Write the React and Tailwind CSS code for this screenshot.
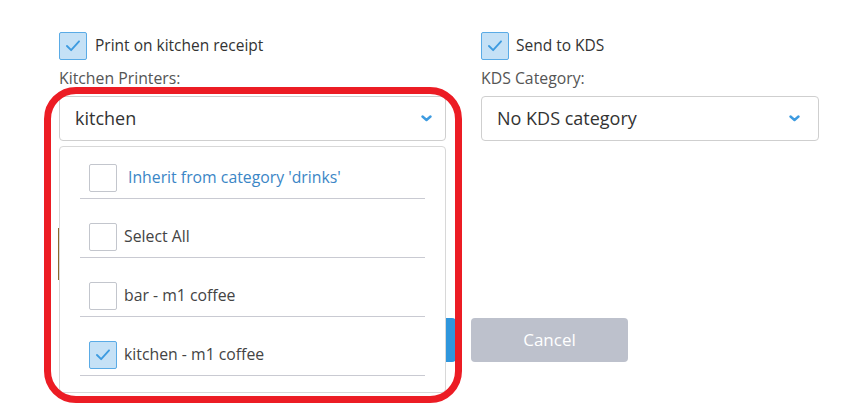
import React from "react";

const Check = () => (
  <svg width="28" height="28" viewBox="0 0 28 28" className="block">
    <polyline
      points="7.5,14 12,18.5 20.5,9"
      fill="none"
      stroke="#3d9be0"
      strokeWidth="2"
      strokeLinecap="round"
      strokeLinejoin="round"
    />
  </svg>
);

const Checkbox = ({ checked }) =>
  checked ? (
    <div className="w-[28px] h-[28px] shrink-0 rounded-[2px] border border-[#5aabe6] bg-[#c5e1f6] flex items-center justify-center">
      <Check />
    </div>
  ) : (
    <div className="w-[28px] h-[28px] shrink-0 rounded-[2px] border border-[#c3c6cd] bg-white" />
  );

const Chevron = () => (
  <svg width="11" height="7" viewBox="0 0 11 7" className="block">
    <polyline
      points="1.5,1.5 5.5,5 9.5,1.5"
      fill="none"
      stroke="#3d9be0"
      strokeWidth="2.4"
      strokeLinecap="round"
      strokeLinejoin="round"
    />
  </svg>
);

const printers = [
  { label: "Inherit from category 'drinks'", checked: false, inherit: true },
  { label: "Select All", checked: false },
  { label: "bar - m1 coffee", checked: false },
  { label: "kitchen - m1 coffee", checked: true },
];

const App = () => {
  return (
    <div className="relative w-[868px] h-[410px] overflow-hidden bg-white font-['Open_Sans',sans-serif] text-[#333]">
      <div className="flex pl-[59px] pt-[32px]">
        {/* kitchen printers */}
        <div className="w-[387px]">
          <div className="flex items-center gap-[8px] h-[28px]">
            <Checkbox checked />
            <span className="text-[15.5px]">Print on kitchen receipt</span>
          </div>
          <div className="mt-[8px] text-[15.8px] leading-[20px] text-[#555]">
            Kitchen Printers:
          </div>
          <div className="relative mt-[8px]">
            <div className="h-[45px] flex items-center justify-between pl-[15px] pr-[13px] border border-[#cfcfcf] rounded-[4px] bg-white">
              <span className="text-[18px]">kitchen</span>
              <Chevron />
            </div>

            {/* open menu */}
            <div className="absolute left-0 top-[50px] z-10 w-[387px] bg-white border border-[#d8d8d8] rounded-[4px] px-[20px] pt-[17px] pb-[16px]">
              {printers.map((p, i) => (
                <div
                  key={p.label}
                  className={`flex items-center border-b border-[#c9cad2] pl-[9px] pb-[6px] ${
                    i === 0 ? "pt-0" : "pt-[24px]"
                  }`}
                >
                  <Checkbox checked={p.checked} />
                  <span
                    className={
                      p.inherit
                        ? "ml-[11px] text-[15.8px] text-[#3b86c6]"
                        : "ml-[7px] text-[15.8px] text-[#444]"
                    }
                  >
                    {p.label}
                  </span>
                </div>
              ))}
            </div>
          </div>
        </div>

        {/* kds */}
        <div className="ml-[35px] w-[338px]">
          <div className="flex items-center gap-[7px] h-[28px]">
            <Checkbox checked />
            <span className="text-[15.5px]">Send to KDS</span>
          </div>
          <div className="mt-[8px] text-[15.8px] leading-[20px] text-[#555]">
            KDS Category:
          </div>
          <div className="mt-[8px] h-[45px] flex items-center justify-between pl-[15px] pr-[18px] border border-[#cfcfcf] rounded-[4px] bg-white">
            <span className="text-[18px]">No KDS category</span>
            <Chevron />
          </div>
        </div>
      </div>

      {/* hidden field behind the menu */}
      <div className="ml-[58px] mt-[87px] w-[2px] h-[52px] bg-[#8a6a2c]" />

      <div className="flex gap-[15px] pl-[299px] mt-[38px]">
        <button className="w-[157px] h-[44px] rounded-[4px] bg-[#2f96dc] text-white text-[17px]">
          Save
        </button>
        <button className="w-[157px] h-[44px] rounded-[4px] bg-[#bdc1cc] text-white text-[17px]">
          Cancel
        </button>
      </div>

      {/* annotation */}
      <div className="absolute left-[44px] top-[87px] w-[418px] h-[316px] z-20 border-[7px] border-[#ec1c24] rounded-[32px] pointer-events-none" />
    </div>
  );
};

export default App;
